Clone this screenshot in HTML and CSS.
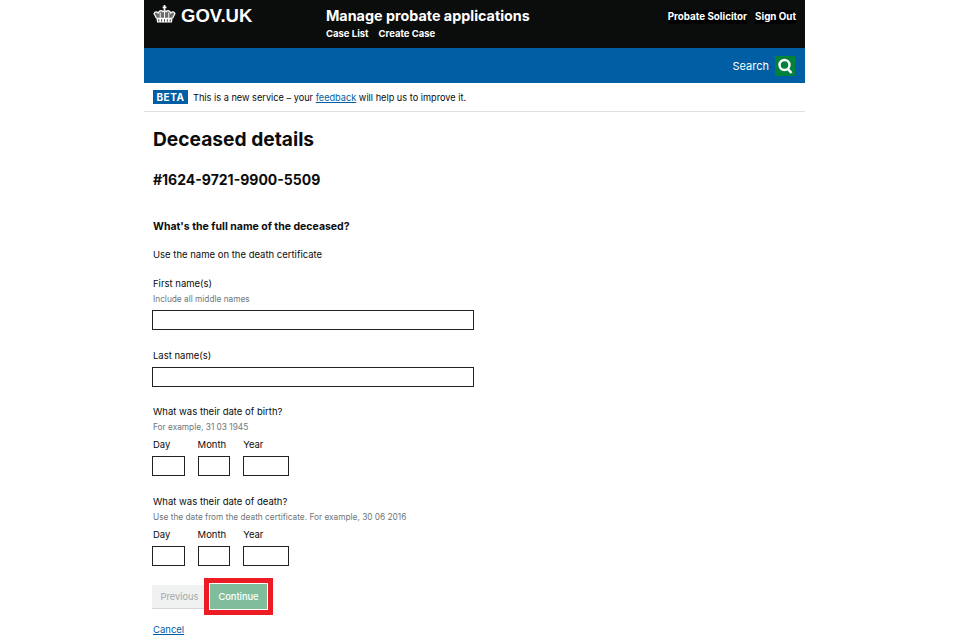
FILE: index.html
```html
<!DOCTYPE html>
<html lang="en">
<head>
<meta charset="utf-8">
<title>Deceased details</title>
<link rel="stylesheet" href="styles.css">
</head>
<body>
<div class="page">
  <header class="top">
    <div class="brand">
      <svg class="crown" viewBox="0 0 24 20" width="23" height="19" aria-hidden="true">
        <path d="M12 0v6M10 2.500h4" stroke="#fff" stroke-width="1.700" fill="none"/>
        <path d="M3.500 14 1 9c1-2.500 3.500-2.500 4.500 0 .3-3 3-4 4.800-2 .8-1.200 2.700-1.200 3.400 0 1.800-2 4.500-1 4.800 2 1-2.500 3.500-2.500 4.500 0L20.500 14" stroke="#fff" stroke-width="1.300" fill="#6b6c6c"/>
        <path d="M12 6.500v7M7.500 8v5.500M16.500 8v5.500" stroke="#fff" stroke-width="1" fill="none"/>
        <path d="M3.500 13.500h17l-.6 5H4.100z" fill="#fff"/>
        <path d="M6 15v2.500M9 15v2.500M12 15v2.500M15 15v2.500M18 15v2.500" stroke="#0b0c0c" stroke-width=".8"/>
      </svg>
      <span class="logo">GOV.UK</span>
    </div>
    <div class="service">
      <div class="service-name">Manage probate applications</div>
      <nav class="service-nav"><a>Case List</a><a>Create Case</a></nav>
    </div>
    <div class="user"><span>Probate Solicitor</span><span>Sign Out</span></div>
  </header>
  <div class="searchbar">
    <span>Search</span>
    <span class="search-btn">
      <svg viewBox="0 0 20 20" width="20" height="20" aria-hidden="true"><circle cx="9.500" cy="9" r="5" stroke="#fff" stroke-width="2.400" fill="none"/><path d="m12.500 12.500 4 4.500" stroke="#fff" stroke-width="2.600"/></svg>
    </span>
  </div>
  <div class="beta"><strong class="tag">BETA</strong><span>This is a new service – your <a href="#">feedback</a> will help us to improve it.</span></div>
  <main class="content">
    <h1>Deceased details</h1>
    <h2>#1624-9721-9900-5509</h2>
    <h3>What's the full name of the deceased?</h3>
    <p class="intro">Use the name on the death certificate</p>
    <div class="field first">
      <div class="label">First name(s)</div>
      <div class="hint">Include all middle names</div>
      <div class="input wide"></div>
    </div>
    <div class="field last">
      <div class="label">Last name(s)</div>
      <div class="input wide"></div>
    </div>
    <div class="field dob">
      <div class="label">What was their date of birth?</div>
      <div class="hint">For example, 31 03 1945</div>
      <div class="date">
        <div><div class="label">Day</div><div class="input short"></div></div>
        <div><div class="label">Month</div><div class="input short"></div></div>
        <div><div class="label">Year</div><div class="input year"></div></div>
      </div>
    </div>
    <div class="field dod">
      <div class="label">What was their date of death?</div>
      <div class="hint">Use the date from the death certificate. For example, 30 06 2016</div>
      <div class="date">
        <div><div class="label">Day</div><div class="input short"></div></div>
        <div><div class="label">Month</div><div class="input short"></div></div>
        <div><div class="label">Year</div><div class="input year"></div></div>
      </div>
    </div>
    <div class="actions">
      <span class="btn prev">Previous</span>
      <span class="highlight"><span class="btn next">Continue</span></span>
    </div>
    <a class="cancel" href="#">Cancel</a>
  </main>
</div>
</body>
</html>
```
FILE: styles.css
```css
* { box-sizing: border-box; }
html, body { margin: 0; height: 640px; overflow: hidden; background: #fff; }
body { font-family: Inter, "Noto Sans", sans-serif; color: #0b0c0c; }
.page { width: 661px; margin-left: 144px; }
.top { height: 48px; background: #0b0c0c; color: #fff; display: flex; padding: 0 9px; }
.brand { width: 173px; display: flex; align-items: flex-start; padding-top: 5px; gap: 5px; }
.logo { font-family: "Liberation Sans", sans-serif; font-weight: 700; font-size: 18.500px; line-height: 22px; }
.service { flex: 1; padding-top: 6px; }
.service-name { font-size: 14.350px; font-weight: 700; line-height: 20px; }
.service-nav { display: flex; gap: 10px; font-size: 9.500px; font-weight: 700; line-height: 14px; margin-top: 1px; }
.user { display: flex; align-items: flex-start; gap: 8px; font-size: 9.800px; font-weight: 700; line-height: 14px; padding-top: 10px; }
.user span { background: #000; }
.searchbar { height: 35px; background: #005ea5; color: #fff; display: flex; justify-content: flex-end; align-items: flex-start; gap: 6px; padding: 8px 10px 0 0; font-size: 11px; line-height: 20px; }
.search-btn { width: 20px; height: 20px; background: #00823b; display: block; }
.search-btn svg { display: block; }
.beta { height: 29px; border-bottom: 1px solid #dee0e2; display: flex; align-items: flex-start; gap: 5px; padding: 7px 9px 0; font-size: 9.200px; line-height: 15px; }
.tag { background: #005ea5; color: #fff; padding: 0 3.500px; font-size: 10px; line-height: 14px; letter-spacing: 0.500px; }
.beta a { color: #005ea5; }
.content { padding: 0 8px; }
h1 { font-size: 19.200px; line-height: 26px; font-weight: 700; margin: 14px 0 0; padding-left: 1px; }
h2 { font-size: 14px; line-height: 20px; font-weight: 700; margin: 18px 0 0; padding-left: 1px; }
h3 { font-size: 10.500px; line-height: 14px; font-weight: 700; margin: 30px 0 0; padding-left: 1px; }
.intro { font-size: 9.500px; line-height: 14px; margin: 14px 0 0; padding-left: 1px; }
.label { font-size: 9.500px; line-height: 14px; padding-left: 1px; }
.date > div + div .label { padding-left: 0; }
.hint { font-size: 8.300px; line-height: 12px; color: #6f777b; margin-top: 2px; padding-left: 1px; }
.field.first { margin-top: 15px; }
.field.first .input { margin-top: 5px; }
.field.last { margin-top: 19px; }
.field.last .input { margin-top: 4px; }
.field.dob { margin-top: 18px; }
.field.dod { margin-top: 19px; }
.input { height: 20px; border: 1px solid #222; background: #fff; }
.wide { width: 322px; }
.short { width: 32.600px; }
.year { width: 46px; }
.date { display: flex; gap: 13px; margin-top: 5px; }
.date .input { margin-top: 4px; }
.actions { display: flex; align-items: center; margin-top: 12px; }
.btn { display: block; font-size: 9.300px; text-align: center; }
.prev { width: 52px; height: 24px; line-height: 24px; padding-left: 3px; background: #f0f1f1; color: #a5a8a9; border-bottom: 1px solid #d5d7d8; }
.highlight { border: 5px solid #ed1c24; padding: 1px; display: block; }
.next { width: 57px; height: 25px; line-height: 26px; background: #7fbd9c; color: #fff; font-weight: 500; }
.cancel { display: inline-block; margin-top: 8px; padding-left: 1px; font-size: 9.500px; line-height: 14px; color: #005ea5; }
```
